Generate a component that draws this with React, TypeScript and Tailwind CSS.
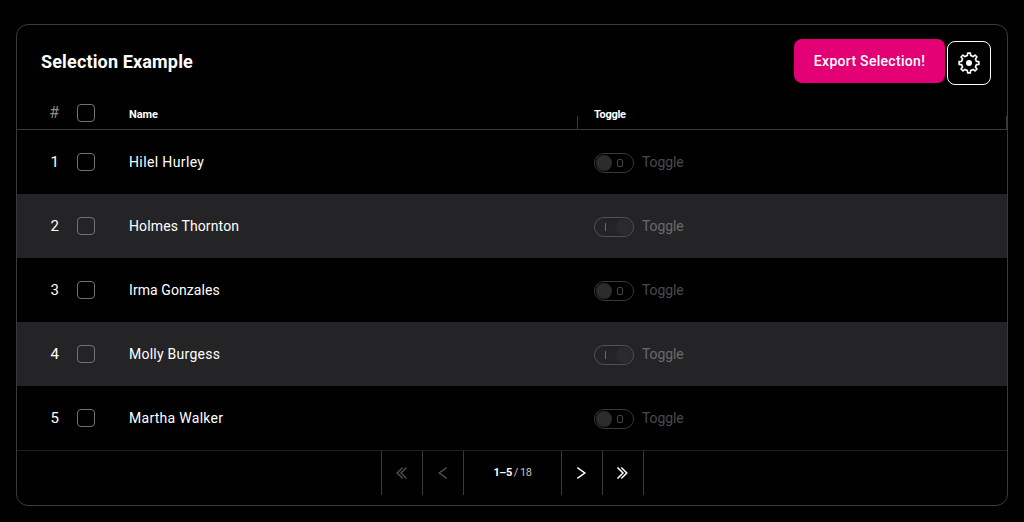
import React from 'react';

type Person = { id: number; name: string; on: boolean; tracking: string };

const people: Person[] = [
  { id: 1, name: 'Hilel Hurley', on: false, tracking: 'tracking-[0.37px]' },
  { id: 2, name: 'Holmes Thornton', on: true, tracking: 'tracking-[0.13px]' },
  { id: 3, name: 'Irma Gonzales', on: false, tracking: 'tracking-[0.08px]' },
  { id: 4, name: 'Molly Burgess', on: true, tracking: 'tracking-[0.25px]' },
  { id: 5, name: 'Martha Walker', on: false, tracking: 'tracking-[0.28px]' },
];

function gearPath(cx: number, cy: number): string {
  const points: string[] = [];
  for (let i = 0; i < 8; i++) {
    const base = (i * Math.PI) / 4 - Math.PI / 2;
    const corners: [number, number][] = [
      [-0.22, 7.6],
      [-0.14, 10],
      [0.14, 10],
      [0.22, 7.6],
    ];
    for (const [da, r] of corners) {
      points.push(`${(cx + r * Math.cos(base + da)).toFixed(2)} ${(cy + r * Math.sin(base + da)).toFixed(2)}`);
    }
  }
  return `M${points.join('L')}Z`;
}

function GearIcon() {
  return (
    <svg width="24" height="24" viewBox="0 0 24 24" fill="none">
      <path d={gearPath(12, 12)} stroke="#fff" strokeWidth="1.6" strokeLinejoin="round" />
      <circle cx="12" cy="12" r="3" fill="#fff" />
    </svg>
  );
}

function Checkbox() {
  return <span className="box-border block size-[18px] shrink-0 rounded-[4px] border border-[#727272]" />;
}

function Toggle({ on }: { on: boolean }) {
  return (
    <div className="flex items-center">
      <span
        className={
          on
            ? 'mt-[2px] flex h-5 w-10 items-center justify-between rounded-full border border-[#525254] px-px'
            : 'mt-[2px] flex h-5 w-10 items-center justify-between rounded-full border border-[#38383a] px-px'
        }
      >
        {on ? (
          <>
            <span className="ml-[9px] h-2 w-px bg-[#6a6a6c]" />
            <span className="size-4 rounded-full bg-[#2b2b2d]" />
          </>
        ) : (
          <>
            <span className="size-4 rounded-full bg-[#2c2c2e]" />
            <span className="mr-[9px] h-2 w-[6px] rounded-[2px] border border-[#484848]" />
          </>
        )}
      </span>
      <span
        className={
          on
            ? 'ml-2 text-[14px] leading-5 tracking-[-0.1px] text-[#6a6a6c]'
            : 'ml-2 text-[14px] leading-5 tracking-[-0.1px] text-[#4b4b4b]'
        }
      >
        Toggle
      </span>
    </div>
  );
}

function PageButton({ d, muted }: { d: string; muted?: boolean }) {
  return (
    <button className="flex h-11 w-[41px] items-center justify-center border-r border-[#3a3a3c]">
      <svg width="16" height="16" viewBox="0 0 16 16" fill="none">
        <path d={d} stroke={muted ? '#4c4c4c' : '#fff'} strokeWidth="1.5" />
      </svg>
    </button>
  );
}

export default function App() {
  return (
    <div className="h-[522px] w-[1024px] bg-black px-4 pt-6 font-['Roboto',sans-serif] text-white">
      <section className="flex h-[482px] flex-col overflow-hidden rounded-[12px] border border-[#3a3a3c]">
        <header className="flex h-[72px] shrink-0 items-start justify-between pr-4 pl-6">
          <h1 className="mt-[25px] text-[18px] leading-6 font-bold tracking-[0.15px]">Selection Example</h1>
          <div className="flex gap-[2px]">
            <button className="mt-[14px] h-11 w-[151px] rounded-[8px] bg-[#e20074] text-[14px] font-medium tracking-[0.3px]">
              Export Selection!
            </button>
            <button className="mt-4 flex size-11 items-center justify-center rounded-[8px] border border-white">
              <GearIcon />
            </button>
          </div>
        </header>

        <div className="flex h-[33px] shrink-0 border-b border-[#3a3a3c]">
          <div className="w-[42px] pt-[6px] text-right text-[16px] leading-5 text-[#8c8c8c]">#</div>
          <div className="ml-[18px] pt-[7px]">
            <Checkbox />
          </div>
          <div className="ml-[34px] w-[448px] pt-[10px] text-[11px] leading-4 font-bold tracking-[-0.1px]">Name</div>
          <div className="h-[13px] w-px self-end bg-[#3a3a3c]" />
          <div className="ml-4 flex-1 pt-[10px] text-[11px] leading-4 font-bold tracking-[-0.3px]">Toggle</div>
          <div className="h-[13px] w-px self-end bg-[#3a3a3c]" />
        </div>

        {people.map((p) => (
          <div
            key={p.id}
            className={
              p.on ? 'flex h-16 shrink-0 items-center bg-[#242426]' : 'flex h-16 shrink-0 items-center bg-black'
            }
          >
            <div className="w-[42px] text-right text-[15px] leading-5">{p.id}</div>
            <div className="ml-[18px]">
              <Checkbox />
            </div>
            <div className={`ml-[34px] w-[465px] text-[14px] leading-5 ${p.tracking}`}>{p.name}</div>
            <Toggle on={p.on} />
          </div>
        ))}

        <footer className="flex flex-1 items-start border-t border-[#202021]">
          <nav className="ml-[364px] flex h-11 border-l border-[#3a3a3c]">
            <PageButton muted d="M8.7 2.5L3.2 8L8.7 13.5M12.5 2.5L7 8L12.5 13.5" />
            <PageButton muted d="M11.7 2.7L4.2 8L11.7 13.3" />
            <div className="flex h-11 w-[98px] items-center justify-center border-r border-[#3a3a3c] text-[11px] tracking-[-0.4px]">
              <span className="font-bold">1–5</span>
              <span className="ml-[2px] text-[#c4c4c4]">
                /<span className="ml-[2px]">18</span>
              </span>
            </div>
            <PageButton d="M3.3 2.7L10.8 8L3.3 13.3" />
            <PageButton d="M2.5 2.5L8 8L2.5 13.5M6.3 2.5L11.8 8L6.3 13.5" />
          </nav>
        </footer>
      </section>
    </div>
  );
}
